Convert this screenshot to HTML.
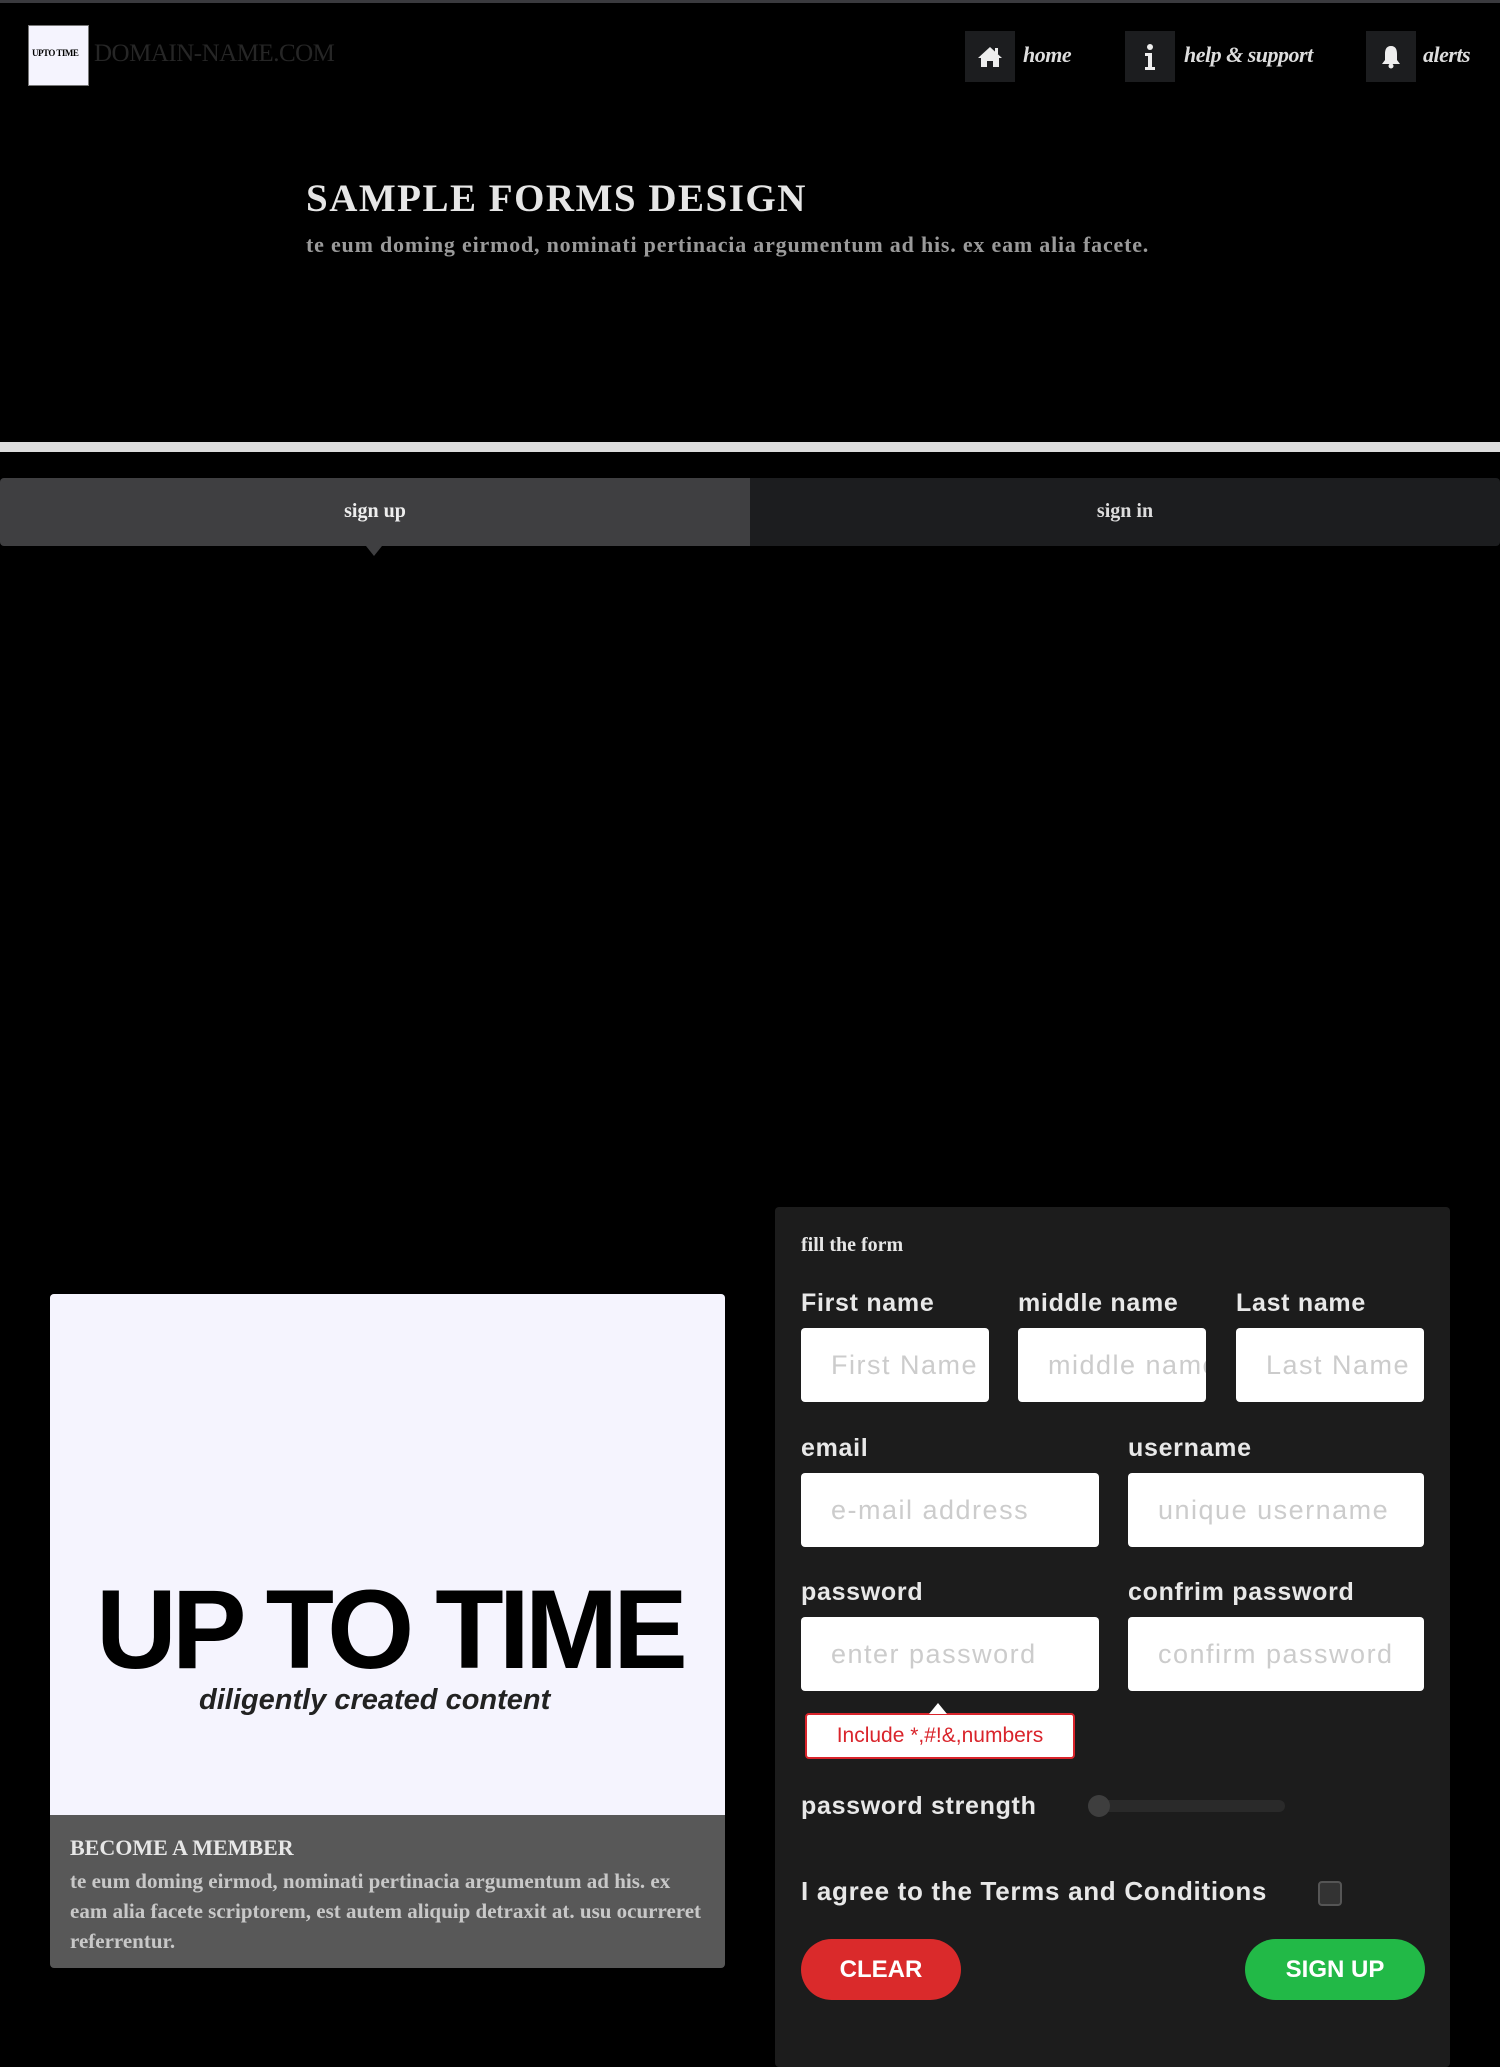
<!DOCTYPE html>
<html><head><meta charset="utf-8">
<style>
*{margin:0;padding:0;box-sizing:border-box}
body{width:1500px;height:2048px;background:#000;position:relative;overflow:hidden;font-family:"Liberation Sans",sans-serif}
.a{position:absolute}
.serif{font-family:"Liberation Serif",serif;font-weight:bold}
.nb{background:#1c1d1f;width:50px;height:51px;display:flex;align-items:center;justify-content:center}
.nt{font-family:"Liberation Serif",serif;font-style:italic;font-weight:bold;color:#ddd;font-size:22px;line-height:51px;letter-spacing:-0.5px}
.lbl{color:#e8e8e8;font-weight:bold;font-size:25px;line-height:30px;letter-spacing:0.7px;white-space:nowrap}
.inp{background:#fff;border-radius:4px;height:74px;color:#ccc;font-size:27px;line-height:74px;padding-left:30px;overflow:hidden;white-space:nowrap;letter-spacing:1.5px}
</style></head><body>
<div class="a" style="left:0;top:0;width:1500px;height:3px;background:#3a3a3e"></div>
<div class="a" style="left:28px;top:25px;width:61px;height:61px;background:#f5f4fe;border:1px solid #777"><div class="a serif" style="left:3px;top:22px;font-size:9px;color:#000;letter-spacing:-0.5px">UPTO TIME</div></div>
<div class="a serif" style="left:94px;top:40px;font-size:25px;font-weight:normal;color:#262626;letter-spacing:-0.5px">DOMAIN-NAME.COM</div>

<div class="a nb" style="left:965px;top:31px"><svg width="26" height="24" viewBox="0 0 26 24"><path d="M13 2 L1 13 L4 13 L4 22 L10 22 L10 16 L16 16 L16 22 L22 22 L22 13 L25 13 Z" fill="#eee"/><rect x="18" y="3" width="3" height="6" fill="#eee"/></svg></div>
<div class="a nt" style="left:1023px;top:29px">home</div>
<div class="a nb" style="left:1125px;top:31px"><svg width="14" height="28" viewBox="0 0 14 28"><circle cx="7" cy="4" r="3" fill="#eee"/><path d="M2 10 H9 V24 H12 V27 H2 V24 H5 V13 H2Z" fill="#eee"/></svg></div>
<div class="a nt" style="left:1184px;top:29px">help &amp; support</div>
<div class="a nb" style="left:1366px;top:31px"><svg width="22" height="26" viewBox="0 0 22 26"><path d="M11 2 C6 2 5 6 5 10 V16 L2 20 H20 L17 16 V10 C17 6 16 2 11 2Z" fill="#eee"/><circle cx="11" cy="22" r="2.5" fill="#eee"/></svg></div>
<div class="a nt" style="left:1423px;top:29px">alerts</div>

<div class="a serif" style="left:306px;top:176px;font-size:39px;color:#e6e6e6;letter-spacing:1.5px">SAMPLE FORMS DESIGN</div>
<div class="a serif" style="left:306px;top:232px;font-size:22px;color:#9a9a9a;letter-spacing:0.8px;white-space:nowrap">te eum doming eirmod, nominati pertinacia argumentum ad his. ex eam alia facete.</div>

<div class="a" style="left:0;top:442px;width:1500px;height:10px;background:#dcdcdc"></div>

<div class="a" style="left:0;top:478px;width:750px;height:68px;background:#3f3f41;border-radius:4px 0 0 4px"></div>
<div class="a" style="left:750px;top:478px;width:750px;height:68px;background:#1c1d1f;border-radius:0 4px 4px 0"></div>
<div class="a" style="left:366px;top:546px;width:0;height:0;border-left:8px solid transparent;border-right:8px solid transparent;border-top:10px solid #3f3f41"></div>
<div class="a serif" style="left:0;top:500px;width:750px;text-align:center;color:#eee;font-size:20px">sign up</div>
<div class="a serif" style="left:750px;top:500px;width:750px;text-align:center;color:#ddd;font-size:20px">sign in</div>

<div class="a" style="left:50px;top:1294px;width:675px;height:674px;background:#585858;border-radius:4px;overflow:hidden">
  <div class="a" style="left:0;top:0;width:675px;height:521px;background:#f5f4fe"></div>
  <div class="a" style="left:46px;top:280px;font-size:112px;font-weight:bold;color:#000;letter-spacing:-5px;line-height:112px;white-space:nowrap">UP TO TIME</div>
  <div class="a" style="left:149px;top:390px;font-size:29px;font-weight:bold;font-style:italic;color:#222;white-space:nowrap">diligently created content</div>
  <div class="a serif" style="left:20px;top:541px;font-size:22px;color:#e6e6e6">BECOME A MEMBER</div>
  <div class="a serif" style="left:20px;top:572px;width:640px;font-size:21px;color:#c8c8c8;line-height:30px">te eum doming eirmod, nominati pertinacia argumentum ad his. ex eam alia facete scriptorem, est autem aliquip detraxit at. usu ocurreret referrentur.</div>
</div>

<div class="a" style="left:775px;top:1207px;width:675px;height:860px;background:#1c1c1c;border-radius:4px"></div>
<div class="a serif" style="left:801px;top:1234px;color:#e6e6e6;font-size:20px">fill the form</div>

<div class="a lbl" style="left:801px;top:1288px">First name</div>
<div class="a lbl" style="left:1018px;top:1288px">middle name</div>
<div class="a lbl" style="left:1236px;top:1288px">Last name</div>
<div class="a inp" style="left:801px;top:1328px;width:188px">First Name</div>
<div class="a inp" style="left:1018px;top:1328px;width:188px">middle name</div>
<div class="a inp" style="left:1236px;top:1328px;width:188px">Last Name</div>

<div class="a lbl" style="left:801px;top:1433px">email</div>
<div class="a lbl" style="left:1128px;top:1433px">username</div>
<div class="a inp" style="left:801px;top:1473px;width:298px">e-mail address</div>
<div class="a inp" style="left:1128px;top:1473px;width:296px">unique username</div>

<div class="a lbl" style="left:801px;top:1577px">password</div>
<div class="a lbl" style="left:1128px;top:1577px">confrim password</div>
<div class="a inp" style="left:801px;top:1617px;width:298px">enter password</div>
<div class="a inp" style="left:1128px;top:1617px;width:296px">confirm password</div>

<div class="a" style="left:805px;top:1713px;width:270px;height:46px;background:#fff;border:2px solid #d9242b;border-radius:4px;color:#d9242b;font-size:21px;line-height:42px;text-align:center">Include *,#!&amp;,numbers</div>
<div class="a" style="left:929px;top:1703px;width:0;height:0;border-left:9px solid transparent;border-right:9px solid transparent;border-bottom:11px solid #fff"></div>

<div class="a lbl" style="left:801px;top:1791px">password strength</div>
<div class="a" style="left:1088px;top:1800px;width:197px;height:12px;background:#2a2a2a;border-radius:6px"></div>
<div class="a" style="left:1088px;top:1795px;width:22px;height:22px;background:#3e3e3e;border-radius:50%"></div>

<div class="a lbl" style="left:801px;top:1876px;font-size:26px">I agree to the Terms and Conditions</div>
<div class="a" style="left:1318px;top:1881px;width:24px;height:25px;background:#333;border:2px solid #555;border-radius:4px"></div>

<div class="a" style="left:801px;top:1939px;width:160px;height:61px;background:#da2a2b;border-radius:31px;color:#fff;font-weight:bold;font-size:24px;line-height:61px;text-align:center">CLEAR</div>
<div class="a" style="left:1245px;top:1939px;width:180px;height:61px;background:#22b947;border-radius:31px;color:#fff;font-weight:bold;font-size:24px;line-height:61px;text-align:center">SIGN UP</div>
</body></html>
